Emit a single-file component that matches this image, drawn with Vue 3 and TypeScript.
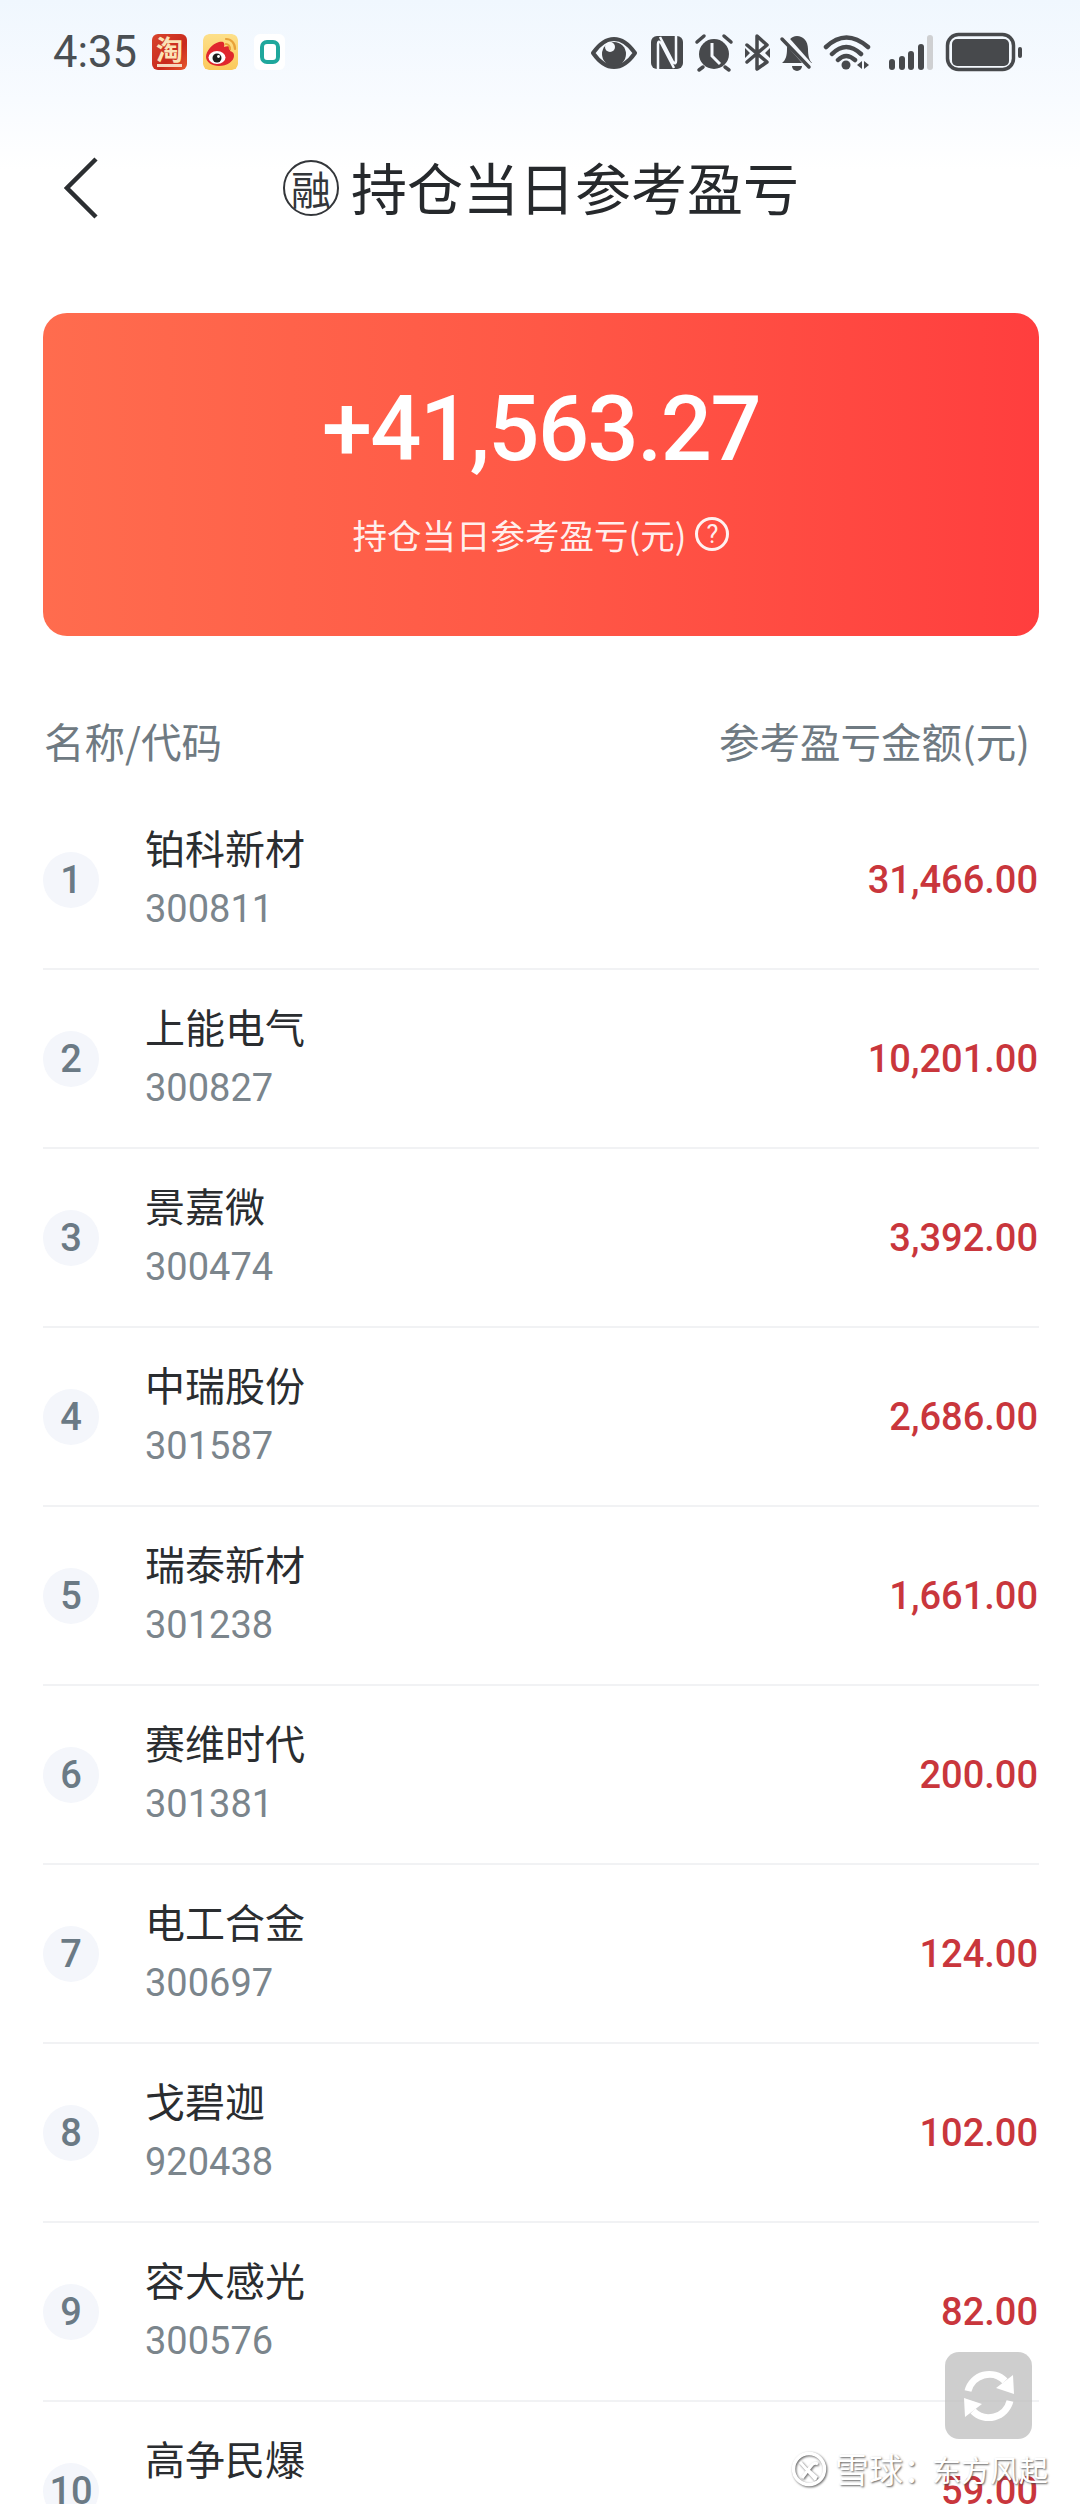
<script setup lang="ts">
interface Holding {
  name: string
  code: string
  amount: string
}

const holdings: Holding[] = [
  { name: '铂科新材', code: '300811', amount: '31,466.00' },
  { name: '上能电气', code: '300827', amount: '10,201.00' },
  { name: '景嘉微', code: '300474', amount: '3,392.00' },
  { name: '中瑞股份', code: '301587', amount: '2,686.00' },
  { name: '瑞泰新材', code: '301238', amount: '1,661.00' },
  { name: '赛维时代', code: '301381', amount: '200.00' },
  { name: '电工合金', code: '300697', amount: '124.00' },
  { name: '戈碧迦', code: '920438', amount: '102.00' },
  { name: '容大感光', code: '300576', amount: '82.00' },
  { name: '高争民爆', code: '002827', amount: '59.00' },
]
</script>

<template>
  <div class="page">
    <div class="status-bar">
      <span class="time">4:35</span>
      <span class="app-icon taobao"><span class="tao-char">淘</span><i class="tao-strip"></i></span>
      <svg class="app-icon" viewBox="0 0 35 36">
        <defs>
          <linearGradient id="wb" x1="0" y1="0" x2="0" y2="1">
            <stop offset="0" stop-color="#fde08a" />
            <stop offset="1" stop-color="#fbc95c" />
          </linearGradient>
        </defs>
        <rect width="35" height="36" rx="6" fill="url(#wb)" />
        <path d="M3 23c0-6 6-13 13-15 5-1 6 1 5 5 5-2 8 0 6 4 3 1 4 2 4 5 0 5-7 10-15 10-7 0-13-4-13-9z" fill="#e0262d" />
        <ellipse cx="14" cy="23.5" rx="8.5" ry="6.5" fill="#fff" />
        <circle cx="14" cy="24" r="4.5" fill="#1d1d1d" />
        <circle cx="15.5" cy="22.5" r="1.4" fill="#fff" />
        <path d="M23 5c5 0 9 4 9 10M23 10c2 0 4 2 4 5" fill="none" stroke="#e8a23a" stroke-width="2.2" stroke-linecap="round" />
      </svg>
      <span class="app-icon zero"><i class="zero-ring"></i></span>
      <svg class="sys-icons" viewBox="591 30 431 42">
        <!-- eye -->
        <path d="M593 52C600 42 606 38 614 38s14 4 21 14C628 62 622 66 614 66s-14-4-21-14z" fill="none" stroke="#47494c" stroke-width="4" stroke-linejoin="round" />
        <circle cx="614" cy="53" r="12" fill="#47494c" />
        <circle cx="610" cy="46" r="5" fill="#f5f9fe" />
        <!-- nfc -->
        <rect x="651" y="35" width="32" height="33" rx="6" fill="#47494c" />
        <path d="M658 68V43q0-4 3-1l13 25" fill="none" stroke="#f5f9fe" stroke-width="2.5" />
        <path d="M676 35V60q0 4-3 1L660 36" fill="none" stroke="#f5f9fe" stroke-width="2.5" />
        <!-- alarm -->
        <circle cx="714" cy="53" r="15" fill="#47494c" />
        <path d="M712 42V55L720 63" fill="none" stroke="#f5f9fe" stroke-width="3" />
        <path d="M697 41l7-6M731 41l-7-6M703 66l-4 3M725 66l4 3" stroke="#47494c" stroke-width="3.5" stroke-linecap="round" />
        <!-- bluetooth off -->
        <path d="M747 44 767 61 757 68V35L767 44 747 61" fill="none" stroke="#47494c" stroke-width="3.5" stroke-linejoin="round" stroke-linecap="round" />
        <path d="M745 47l5 5-5 5zM770 47l-5 5 5 5z" fill="#47494c" />
        <!-- bell off -->
        <path d="M782 62c4-3 5-8 5-14 0-8 4-13 10-13s11 5 11 13c0 6 1 11 4 14z" fill="#47494c" />
        <path d="M792 65a5 5 0 0 0 10 0z" fill="#47494c" />
        <path d="M782 34 812 68" stroke="#f5f9fe" stroke-width="7" />
        <path d="M782 38 809 66" stroke="#47494c" stroke-width="3.5" stroke-linecap="round" />
        <!-- wifi -->
        <path d="M826 46Q846 27 868 46M832 53Q846 39 861 53M838 59Q846 51 855 59" fill="none" stroke="#47494c" stroke-width="4.5" stroke-linecap="round" />
        <circle cx="846" cy="64" r="4.5" fill="#47494c" />
        <path d="M862 60v8l-5-4zM864 60v8l5-4z" fill="#47494c" />
        <!-- signal -->
        <rect x="889" y="58" width="6" height="11" rx="3" fill="#47494c" />
        <rect x="899" y="55" width="6" height="14" rx="3" fill="#47494c" />
        <rect x="908" y="50" width="6" height="19" rx="3" fill="#47494c" />
        <rect x="918" y="43" width="6" height="26" rx="3" fill="#47494c" />
        <rect x="927" y="34" width="6" height="35" rx="3" fill="#cfd0d2" />
        <!-- battery -->
        <rect x="947.5" y="33.5" width="66" height="35" rx="11" fill="none" stroke="#47494c" stroke-width="3.5" />
        <rect x="952" y="38" width="57" height="27" rx="5" fill="#47494c" />
        <rect x="1018" y="46" width="4" height="11" rx="2" fill="#47494c" />
      </svg>
    </div>

    <div class="nav-bar">
      <svg class="back" viewBox="0 0 34 62">
        <path d="M32 2 3 31 32 60" fill="none" stroke="#2b2e31" stroke-width="4.5" />
      </svg>
      <span class="seal">融</span>
      <h1 class="title">持仓当日参考盈亏</h1>
    </div>

    <div class="summary-card">
      <div class="summary-value">+41,563.27</div>
      <div class="summary-label">
        <span>持仓当日参考盈亏(元)</span>
        <span class="help">?</span>
      </div>
    </div>

    <div class="list-head">
      <span>名称/代码</span>
      <span>参考盈亏金额(元)</span>
    </div>

    <ul class="list">
      <li v-for="(item, index) in holdings" :key="item.code" class="row">
        <span class="rank">{{ index + 1 }}</span>
        <div class="info">
          <div class="name">{{ item.name }}</div>
          <div class="code">{{ item.code }}</div>
        </div>
        <span class="amount">{{ item.amount }}</span>
      </li>
    </ul>

    <button class="refresh">
      <svg viewBox="0 0 60 60">
        <path d="M9 25A22 22 0 0 1 46 15" fill="none" stroke="#fff" stroke-width="7" />
        <path d="M51 35A22 22 0 0 1 14 45" fill="none" stroke="#fff" stroke-width="7" />
        <path d="M37 22 55 28 54 9zM23 38 5 32 6 51z" fill="#fff" />
      </svg>
    </button>

    <div class="watermark">
      <svg viewBox="0 0 36 36">
        <circle cx="18" cy="18" r="15.5" fill="none" stroke="#fff" stroke-width="3.5" />
        <path d="M9 11 25 29M11 27 20 15q3-4 7-2M18 20l8 7" fill="none" stroke="#fff" stroke-width="3" />
      </svg>
      <span class="wm-brand">雪球：</span>
      <span class="wm-user">东方风起</span>
    </div>
  </div>
</template>

<style>
html,
body {
  margin: 0;
  background: #fff;
}
</style>

<style scoped>
.page {
  position: relative;
  width: 1080px;
  height: 2504px;
  overflow: hidden;
  background: linear-gradient(180deg, #f0f7fe 0, #f8fbff 100px, #ffffff 170px) no-repeat;
  background-size: 100% 170px;
  font-family: "Noto Sans CJK SC", "Noto Sans", sans-serif;
}

.status-bar {
  display: flex;
  align-items: center;
  height: 104px;
  padding: 0 58px 0 53px;
  box-sizing: border-box;
}

.time {
  width: 99px;
  font-family: Roboto, sans-serif;
  font-size: 43.5px;
  color: #4a4f53;
}

.app-icon {
  display: block;
  flex: none;
  width: 35px;
  height: 36px;
  margin-right: 16px;
  border-radius: 6px;
}

.taobao {
  position: relative;
  overflow: hidden;
  background: linear-gradient(135deg, #d8452c, #c92a1e 60%, #e8592b);
  text-align: center;
}

.tao-char {
  display: block;
  font-size: 27px;
  line-height: 29px;
  font-weight: 700;
  color: #fbe3b6;
}

.tao-strip {
  position: absolute;
  left: 5px;
  right: 5px;
  bottom: 3px;
  height: 3px;
  background: #f6d9c0;
}

.zero {
  display: flex;
  align-items: center;
  justify-content: center;
  width: 31px;
  background: #fff;
}

.zero-ring {
  width: 12px;
  height: 16px;
  border: 4px solid #1fa79c;
  border-radius: 7px;
}

.sys-icons {
  display: block;
  width: 431px;
  height: 42px;
  margin-left: auto;
}

.nav-bar {
  display: flex;
  align-items: center;
  height: 168px;
  padding-left: 64px;
}

.back {
  display: block;
  width: 34px;
  height: 62px;
  margin-right: 185px;
}

.seal {
  display: flex;
  align-items: center;
  justify-content: center;
  width: 52px;
  height: 52px;
  margin-right: 12px;
  border: 2.5px solid #33363a;
  border-radius: 50%;
  font-size: 40px;
  color: #33363a;
}

.title {
  margin: 0 0 5px;
  font-size: 56px;
  line-height: 72px;
  font-weight: 400;
  color: #26292c;
}

.summary-card {
  height: 323px;
  margin: 41px 41px 0 43px;
  padding-top: 67px;
  box-sizing: border-box;
  border-radius: 24px;
  background: linear-gradient(90deg, #ff6c4e 0%, #ff5846 50%, #ff3e3e 100%);
  color: #fff;
  text-align: center;
}

.summary-value {
  font-family: Roboto, sans-serif;
  font-size: 90px;
  line-height: 100px;
  font-weight: 500;
  letter-spacing: -1.5px;
}

.summary-label {
  display: flex;
  align-items: center;
  justify-content: center;
  gap: 9px;
  margin-top: 30px;
  font-size: 34.5px;
  line-height: 48px;
  color: rgba(255, 255, 255, 0.92);
}

.help {
  display: flex;
  align-items: center;
  justify-content: center;
  width: 28px;
  height: 28px;
  border: 3px solid rgba(255, 255, 255, 0.92);
  border-radius: 50%;
  font-family: Roboto, sans-serif;
  font-size: 25px;
  line-height: 1;
}

.list-head {
  display: flex;
  align-items: center;
  justify-content: space-between;
  height: 96px;
  margin: 59px 50px 0 44px;
  padding-bottom: 6px;
  box-sizing: border-box;
  font-size: 40.5px;
  color: #6f7a82;
}

.list {
  margin: 0 41px 0 43px;
  padding: 0;
  list-style: none;
}

.row {
  display: flex;
  align-items: center;
  height: 179px;
  box-sizing: border-box;
  border-bottom: 2px solid #f1f2f4;
}

.rank {
  display: flex;
  flex: none;
  align-items: center;
  justify-content: center;
  width: 56px;
  height: 56px;
  margin-right: 46px;
  border-radius: 50%;
  background: #f4f6fb;
  font-family: Roboto, sans-serif;
  font-size: 38px;
  font-weight: 500;
  color: #6b7a85;
}

.info {
  flex: 1;
}

.name {
  margin-bottom: 7px;
  font-size: 40px;
  line-height: 52px;
  color: #2a2d30;
}

.code {
  font-family: Roboto, sans-serif;
  font-size: 38px;
  line-height: 58px;
  color: #7b858c;
}

.amount {
  margin-right: 1px;
  font-family: Roboto, sans-serif;
  font-size: 38px;
  font-weight: 500;
  color: #c9363c;
}

.refresh {
  position: absolute;
  left: 945px;
  top: 2352px;
  display: flex;
  align-items: center;
  justify-content: center;
  width: 87px;
  height: 87px;
  padding: 0;
  border: 0;
  border-radius: 14px;
  background: rgba(190, 190, 190, 0.75);
}

.refresh svg {
  width: 60px;
  height: 60px;
}

.watermark {
  position: absolute;
  left: 791px;
  top: 2447px;
  display: flex;
  align-items: center;
  height: 44px;
  white-space: nowrap;
  color: #fff;
  text-shadow: 1px 1px 2px rgba(70, 70, 70, 0.85);
}

.watermark svg {
  flex: none;
  width: 36px;
  height: 36px;
  margin-right: 8px;
  filter: drop-shadow(1px 1px 1px rgba(70, 70, 70, 0.85));
}

.wm-brand {
  flex: none;
  width: 97px;
  font-size: 34px;
  line-height: 44px;
}

.wm-user {
  flex: none;
  font-size: 29px;
  line-height: 44px;
}
</style>
